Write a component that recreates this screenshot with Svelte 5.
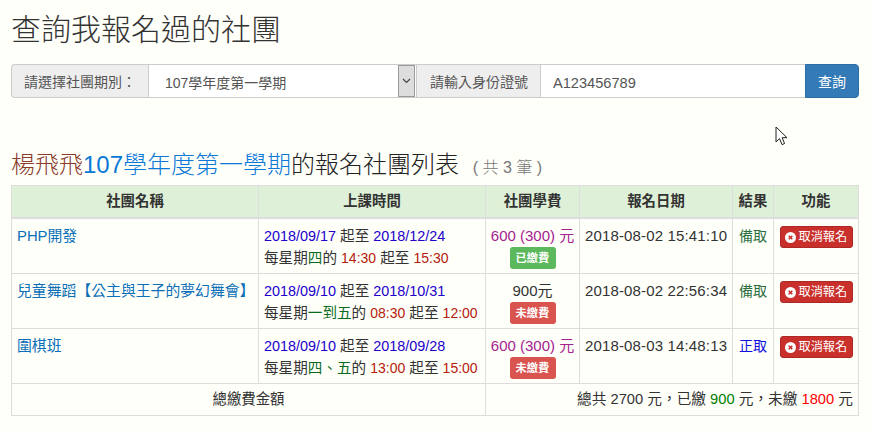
<script lang="ts">
  const rows = [
    {
      name: "PHP開發",
      start: "2018/09/17",
      end: "2018/12/24",
      day: "四",
      from: "14:30",
      to: "15:30",
      fee: "600 (300) 元",
      feeClass: "fee-half",
      paid: true,
      date: "2018-08-02 15:41:10",
      result: "備取",
      resultClass: "wait",
    },
    {
      name: "兒童舞蹈【公主與王子的夢幻舞會】",
      start: "2018/09/10",
      end: "2018/10/31",
      day: "一到五",
      from: "08:30",
      to: "12:00",
      fee: "900元",
      feeClass: "",
      paid: false,
      date: "2018-08-02 22:56:34",
      result: "備取",
      resultClass: "wait",
    },
    {
      name: "圍棋班",
      start: "2018/09/10",
      end: "2018/09/28",
      day: "四、五",
      from: "13:00",
      to: "15:00",
      fee: "600 (300) 元",
      feeClass: "fee-half",
      paid: false,
      date: "2018-08-03 14:48:13",
      result: "正取",
      resultClass: "ok",
    },
  ];
</script>

<div class="page">
  <h1>查詢我報名過的社團</h1>

  <form class="search" on:submit|preventDefault>
    <span class="addon first">請選擇社團期別：</span>
    <div class="select-wrap">
      <select>
        <option>107學年度第一學期</option>
      </select>
      <span class="arrow">
        <svg width="9" height="6" viewBox="0 0 9 6"><path d="M1 1l3.5 3.5L8 1" fill="none" stroke="#444" stroke-width="1.2" /></svg>
      </span>
    </div>
    <span class="addon second">請輸入身份證號</span>
    <input type="text" value="A123456789" />
    <button type="submit" class="go">查詢</button>
  </form>

  <h2>
    <span class="who">楊飛飛</span><span class="term">107學年度第一學期</span>的報名社團列表
    <small>( 共 3 筆 )</small>
  </h2>

  <table>
    <colgroup>
      <col style="width:247px" />
      <col style="width:227px" />
      <col style="width:94px" />
      <col style="width:153px" />
      <col style="width:41px" />
      <col style="width:85px" />
    </colgroup>
    <thead>
      <tr>
        <th>社團名稱</th>
        <th>上課時間</th>
        <th>社團學費</th>
        <th>報名日期</th>
        <th>結果</th>
        <th>功能</th>
      </tr>
    </thead>
    <tbody>
      {#each rows as row}
        <tr>
          <td class="name"><a href="#top">{row.name}</a></td>
          <td class="sched">
            <span class="date">{row.start}</span> 起至 <span class="date">{row.end}</span><br />
            每星期<span class="day">{row.day}</span>的
            <span class="time">{row.from}</span> 起至 <span class="time">{row.to}</span>
          </td>
          <td class="center fee">
            <span class={row.feeClass}>{row.fee}</span>
            <div class="badge" class:paid={row.paid}>{row.paid ? "已繳費" : "未繳費"}</div>
          </td>
          <td class="center stamp">{row.date}</td>
          <td class="center {row.resultClass}">{row.result}</td>
          <td class="center">
            <button type="button" class="cancel">
              <svg width="11" height="11" viewBox="0 0 11 11">
                <circle cx="5.5" cy="5.5" r="5.5" fill="#fff" />
                <path d="M3.7 3.7l3.6 3.6M7.3 3.7l-3.6 3.6" stroke="#c9302c" stroke-width="1.6" />
              </svg>
              取消報名
            </button>
          </td>
        </tr>
      {/each}
      <tr class="total">
        <td colspan="2" class="center">總繳費金額</td>
        <td colspan="4" class="right">
          總共 2700 元，已繳 <span class="sum-ok">900</span> 元，未繳 <span class="sum-no">1800</span> 元
        </td>
      </tr>
    </tbody>
  </table>

  <svg class="cursor" width="14" height="21" viewBox="0 0 14 21">
    <path d="M1 1v15l3.5-3.4 2.5 6 2.6-1.1-2.5-5.8h4.9z" fill="#fff" stroke="#222" stroke-width="1" />
  </svg>
</div>

<style>
  :global(body) {
    background: #fffffa;
  }

  .page {
    position: relative;
    padding: 0 14px 0 11px;
    height: 432px;
    box-sizing: border-box;
    font-family: "Liberation Sans", "Noto Sans CJK TC", sans-serif;
    font-size: 15px;
    color: #333;
  }

  h1 {
    margin: 0;
    padding-top: 10px;
    font-size: 30px;
    font-weight: 300;
    line-height: 40px;
  }

  .search {
    display: flex;
    height: 34px;
    margin-top: 14px;
  }

  .addon {
    display: flex;
    align-items: center;
    box-sizing: border-box;
    background: #eee;
    border: 1px solid #ccc;
    color: #555;
    font-size: 14px;
    white-space: nowrap;
  }

  .first {
    width: 137px;
    padding-left: 12px;
    border-radius: 4px 0 0 4px;
    border-right: 0;
  }

  .second {
    width: 124px;
    padding-left: 13px;
    border-left: 1px solid #ccc;
    border-right: 0;
  }

  .select-wrap {
    position: relative;
    width: 268px;
    flex: none;
  }

  select {
    width: 100%;
    height: 34px;
    padding: 3px 0 0 16px;
    background: #fff;
    border: 1px solid #ccc;
    border-width: 1px 0 1px 1px;
    border-radius: 0;
    appearance: none;
    font: inherit;
    font-size: 14px;
    color: #555;
  }

  .arrow {
    position: absolute;
    top: 1px;
    right: 1px;
    width: 15px;
    height: 30px;
    display: flex;
    align-items: center;
    justify-content: center;
    background: #ddd;
    border: 1px solid #999;
  }

  input {
    flex: 1;
    min-width: 0;
    box-sizing: border-box;
    padding: 3px 12px 0;
    background: #fff;
    border: 1px solid #ccc;
    border-width: 1px 0 1px 1px;
    font: inherit;
    font-size: 14.6px;
    color: #555;
  }

  .go {
    width: 54px;
    flex: none;
    background: #337ab7;
    border: 1px solid #2e6da4;
    border-radius: 0 4px 4px 0;
    color: #fff;
    font: inherit;
    font-size: 14px;
  }

  h2 {
    margin: 50px 0 0;
    font-size: 24px;
    font-weight: 300;
    line-height: 34px;
    color: #222;
  }

  .who {
    color: #8a3b2c;
  }

  .term {
    color: #0a78d6;
  }

  small {
    margin-left: 7px;
    font-size: 16px;
    color: #777;
  }

  table {
    width: 847px;
    margin-top: 0;
    border-collapse: collapse;
    table-layout: fixed;
  }

  th,
  td {
    border: 1px solid #ddd;
    padding: 6px 5px 4px;
    line-height: 22px;
    vertical-align: top;
    font-weight: 400;
  }

  th {
    padding: 5px;
    line-height: 21px;
    background: #dff0d8;
    border-bottom-width: 2px;
    text-align: center;
    font-size: 14.4px;
    font-weight: 700;
    color: #333;
  }

  .total td {
    padding: 4px 5px 5px;
    font-size: 14.7px;
  }

  .total td.center {
    font-size: 14.4px;
  }

  .center {
    text-align: center;
  }

  .right {
    text-align: right;
  }

  .name {
    font-size: 14.85px;
  }

  a {
    color: #0b6fb8;
    text-decoration: none;
  }

  .date {
    font-size: 14.4px;
    color: #2200cc;
  }

  .day {
    color: #0a6b1e;
  }

  .time {
    font-size: 14px;
    color: #b5200d;
  }

  .sched {
    font-size: 14.6px;
  }

  .fee {
    padding: 6px 0 4px;
    white-space: nowrap;
  }

  .stamp {
    letter-spacing: 0.15px;
    white-space: nowrap;
  }

  .fee-half {
    color: #a6228f;
  }

  .badge {
    display: block;
    width: 46px;
    height: 22px;
    margin: 0 auto;
    background: #d9534f;
    border-radius: 3px;
    color: #fff;
    font-size: 11.25px;
    font-weight: 700;
    line-height: 22px;
  }

  .badge.paid {
    background: #5cb85c;
  }

  .wait {
    color: #2a6e3c;
    font-size: 14px;
  }

  .ok {
    color: #1010e0;
    font-size: 14px;
  }

  .cancel {
    display: inline-flex;
    align-items: center;
    gap: 3px;
    box-sizing: border-box;
    width: 73px;
    height: 22px;
    margin-top: 1px;
    padding: 0 0 0 4px;
    background: #c9302c;
    border: 1px solid #ac2925;
    border-radius: 3px;
    color: #fff;
    font: inherit;
    font-size: 12.2px;
    white-space: nowrap;
  }

  .sum-ok {
    color: #008000;
  }

  .sum-no {
    color: #f00;
  }

  .cursor {
    position: absolute;
    left: 775px;
    top: 126px;
  }
</style>
